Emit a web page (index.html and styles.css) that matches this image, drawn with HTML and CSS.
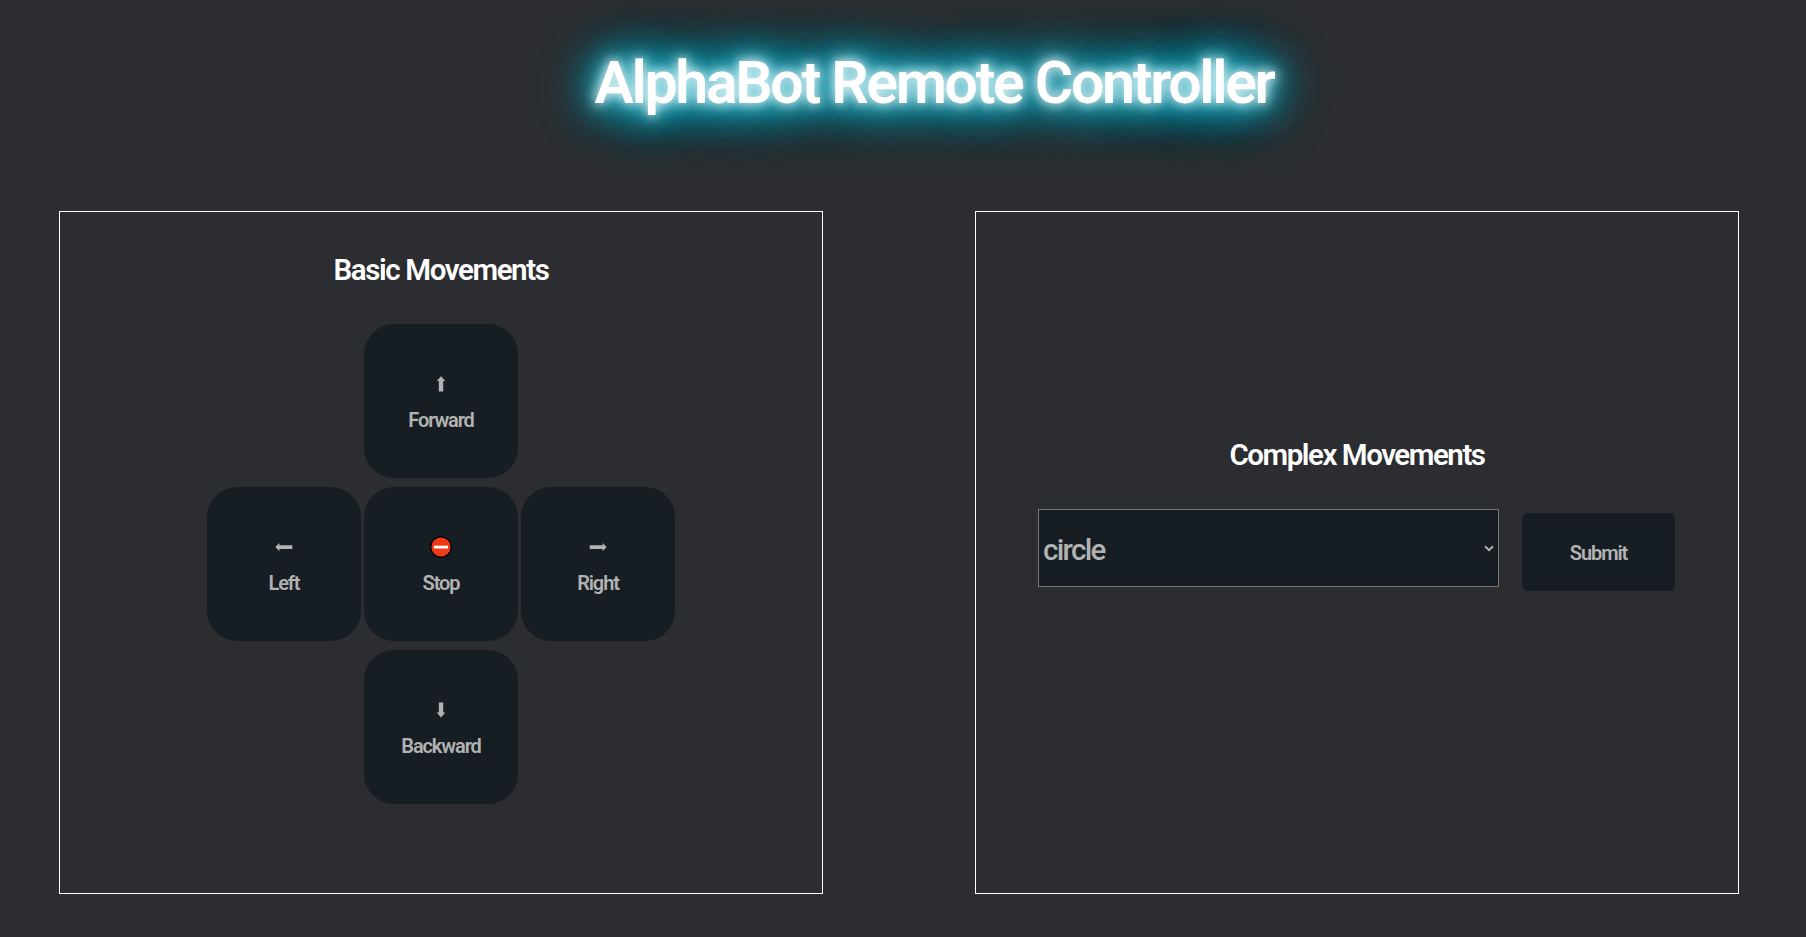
FILE: index.html
```html
<!DOCTYPE html>
<html lang="en">
<head>
<meta charset="utf-8">
<title>AlphaBot Remote Controller</title>
<link rel="stylesheet" href="styles.css">
</head>
<body>
<h1 class="title"><span class="title-text">AlphaBot Remote Controller</span></h1>
<main class="panels">
  <section class="panel panel-basic">
    <h2 class="heading basic-heading">Basic Movements</h2>
    <div class="pad">
      <button class="key key-forward"><svg class="icon" viewBox="0 0 22 22"><path d="M11 3.2 15.3 8H13.2V18.4H8.8V8H6.7Z"/></svg><span class="label">Forward</span></button>
      <button class="key key-left"><svg class="icon" viewBox="0 0 22 22"><path d="M2.3 11 6.4 7V9.2H19.3V13H6.4V15.2Z"/></svg><span class="label">Left</span></button>
      <button class="key key-stop"><svg class="icon" viewBox="0 0 22 22"><circle cx="11" cy="11" r="10.8" fill="#000"/><circle cx="11" cy="11" r="9.6" fill="#f03a17"/><rect x="4" y="9.7" width="14" height="2.8" fill="#fff"/></svg><span class="label">Stop</span></button>
      <button class="key key-right"><svg class="icon" viewBox="0 0 22 22"><path d="M19.7 11 15.6 7V9.2H2.7V13H15.6V15.2Z"/></svg><span class="label">Right</span></button>
      <button class="key key-backward"><svg class="icon" viewBox="0 0 22 22"><path d="M11 18.4 15.3 13.6H13.2V3.5H8.8V13.6H6.7Z"/></svg><span class="label">Backward</span></button>
    </div>
  </section>
  <section class="panel panel-complex">
    <h2 class="heading complex-heading">Complex Movements</h2>
    <form class="form">
      <div class="select" role="listbox" tabindex="0"><span class="value">circle</span><svg class="chevron" viewBox="0 0 10 7"><path d="M1 1.2 5 5.2 9 1.2"/></svg></div>
      <button class="submit" type="button"><span class="label">Submit</span></button>
    </form>
  </section>
</main>
</body>
</html>
```
FILE: styles.css
```css
* { box-sizing: border-box; }
body {
  margin: 0;
  height: 937px;
  overflow: hidden;
  background: #2c2d30;
  color: #fff;
  font-family: Roboto, "Liberation Sans", sans-serif;
  font-weight: 500;
}
.title {
  margin: 0;
  height: 211px;
  padding: 48px 0 0 62px;
  text-align: center;
  font-size: 59px;
  line-height: 70px;
  font-weight: 600;
  letter-spacing: -2.35px;
  white-space: nowrap;
}
.title-text {
  text-shadow:
    0 0 12px #fff,
    0 0 20px #98e8f2,
    0 0 34px #1cbdd6,
    0 0 46px #00a6c8,
    0 0 50px #00a4c0,
    0 0 58px #00a0b4,
    0 0 72px #128080;
}
.panels {
  display: flex;
  gap: 152px;
  padding-left: 59px;
}
.panel {
  width: 764px;
  height: 683px;
  border: 1px solid #fff;
  display: flex;
  flex-direction: column;
  align-items: center;
}
.panel-basic { padding-top: 38px; }
.panel-complex { padding-top: 223px; }
.heading {
  margin: 0;
  height: 74px;
  font-size: 29.5px;
  line-height: 40px;
  font-weight: 600;
  white-space: nowrap;
}
.basic-heading { letter-spacing: -1.4px; }
.complex-heading { letter-spacing: -1.45px; }
.pad {
  display: grid;
  grid-template-columns: repeat(3, 154px);
  grid-template-rows: repeat(3, 154px);
  gap: 9px 3px;
}
.key {
  margin: 0;
  padding: 49px 0 0;
  border: 0;
  border-radius: 30px;
  background: #171e23;
  color: #b2b2b2;
  font: inherit;
  display: flex;
  flex-direction: column;
  align-items: center;
  gap: 13px;
}
.key-forward { grid-area: 1 / 2; }
.key-left { grid-area: 2 / 1; }
.key-stop { grid-area: 2 / 2; }
.key-right { grid-area: 2 / 3; }
.key-backward { grid-area: 3 / 2; }
.icon { width: 22px; height: 22px; fill: currentColor; }
.label {
  font-size: 20px;
  line-height: 24px;
  font-weight: 600;
  letter-spacing: -1.1px;
}
.form {
  display: flex;
  align-items: flex-start;
  gap: 23px;
  padding-right: 1px;
}
.select {
  width: 461px;
  height: 78px;
  padding: 0 4px;
  border: 1px solid #777;
  background: #171e23;
  color: #b2b2b2;
  display: flex;
  align-items: center;
  justify-content: space-between;
}
.value {
  padding-top: 3px;
  font-size: 29.5px;
  line-height: 40px;
  letter-spacing: -1.7px;
}
.chevron { width: 10px; height: 7px; fill: none; stroke: currentColor; stroke-width: 2; }
.submit {
  width: 153px;
  height: 78px;
  margin: 4px 0 0;
  padding: 1px 0 0;
  border: 0;
  border-radius: 6px;
  background: #171e23;
  color: #b2b2b2;
  font: inherit;
}
```
